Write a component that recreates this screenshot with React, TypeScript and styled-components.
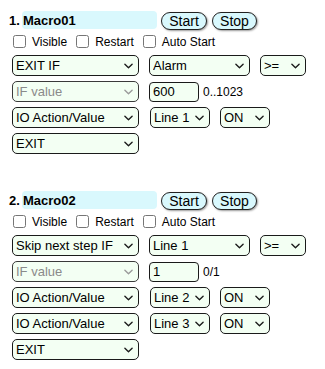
import React from "react";
import styled, { createGlobalStyle } from "styled-components";

const Global = createGlobalStyle`
  body {
    margin: 8px;
    font-family: "Liberation Sans", Arial, sans-serif;
    background: #ffffff;
    color: #000;
  }
`;

const chevron = (color: string) =>
  `url("data:image/svg+xml;utf8,<svg xmlns='http://www.w3.org/2000/svg' width='10' height='6' viewBox='0 0 10 6'><path d='M1 1 L5 5 L9 1' fill='none' stroke='${encodeURIComponent(
    color
  )}' stroke-width='1.5' stroke-linecap='round' stroke-linejoin='round'/></svg>")`;

const Page = styled.div`
  display: flex;
  flex-direction: column;
`;

const Section = styled.div<{ $first?: boolean }>`
  display: flex;
  flex-direction: column;
  margin-top: ${(p) => (p.$first ? "3px" : "37px")};
  padding-left: 1px;
`;

const TitleRow = styled.div`
  display: flex;
  align-items: center;
  height: 18px;
`;

const Num = styled.span`
  font-weight: bold;
  font-size: 13px;
  width: 13px;
`;

const NameInput = styled.input`
  box-sizing: border-box;
  width: 135px;
  height: 18px;
  border: none;
  border-radius: 4px;
  background: #d9f8fd;
  font-family: "Liberation Sans", Arial, sans-serif;
  font-weight: bold;
  font-size: 13px;
  padding: 0 1px;
  margin: 0 4px 0 0;
  color: #000;
  outline: none;
`;

const PillButton = styled.button<{ $w: number }>`
  box-sizing: border-box;
  width: ${(p) => p.$w}px;
  height: 18px;
  margin: 1px 5px 0 0;
  padding: 0;
  border: 1px solid #222;
  border-radius: 9px;
  background: #d9f8fd;
  box-shadow: 1px 1px 2px #9a9a9a;
  font-family: "Liberation Sans", Arial, sans-serif;
  font-size: 14px;
  line-height: 16px;
  color: #000;
`;

const CheckRow = styled.div`
  display: flex;
  align-items: center;
  height: 13px;
  margin-top: 6px;
  font-size: 12px;
`;

const Check = styled.input`
  width: 13px;
  height: 13px;
  margin: 0 6px 0 4px;
`;

const CheckLabel = styled.label`
  margin-right: 5px;
`;

const Rows = styled.div`
  display: flex;
  flex-direction: column;
  gap: 5px;
  margin-top: 7px;
  padding-left: 3px;
`;

const Row = styled.div`
  display: flex;
  align-items: center;
  height: 21px;
`;

const Select = styled.select<{ $w: number; $ml?: number }>`
  appearance: none;
  -webkit-appearance: none;
  box-sizing: border-box;
  width: ${(p) => p.$w}px;
  height: 21px;
  margin: 0 0 0 ${(p) => p.$ml ?? 0}px;
  padding: 0 14px 0 3px;
  border: 1px solid #1a1a1a;
  border-radius: 5px;
  background-color: #f3fff3;
  background-image: ${chevron("#1a1a1a")};
  background-repeat: no-repeat;
  background-position: right 5px center;
  background-size: 9px 6px;
  font-family: "Liberation Sans", Arial, sans-serif;
  font-size: 13px;
  color: #000;
  &:disabled {
    color: #8a8a8a;
    border-color: #3a3a3a;
    background-color: #f3fff3;
    background-image: ${chevron("#9a9a9a")};
    opacity: 1;
  }
`;

const ValueInput = styled.input`
  box-sizing: border-box;
  width: 50px;
  height: 20px;
  margin-left: 10px;
  padding: 0 3px;
  border: 1px solid #1a1a1a;
  border-radius: 4px;
  background: #f3fff3;
  font-family: "Liberation Sans", Arial, sans-serif;
  font-size: 13px;
  color: #000;
`;

const Range = styled.span`
  margin-left: 4px;
  font-size: 12px;
`;

type Step =
  | { kind: "cond"; op: string; src: string }
  | { kind: "value"; value: string; range: string }
  | { kind: "io"; line: string; state: string }
  | { kind: "exit" };

type Macro = { num: number; name: string; steps: Step[] };

const macros: Macro[] = [
  {
    num: 1,
    name: "Macro01",
    steps: [
      { kind: "cond", op: "EXIT IF", src: "Alarm" },
      { kind: "value", value: "600", range: "0..1023" },
      { kind: "io", line: "Line 1", state: "ON" },
      { kind: "exit" },
    ],
  },
  {
    num: 2,
    name: "Macro02",
    steps: [
      { kind: "cond", op: "Skip next step IF", src: "Line 1" },
      { kind: "value", value: "1", range: "0/1" },
      { kind: "io", line: "Line 2", state: "ON" },
      { kind: "io", line: "Line 3", state: "ON" },
      { kind: "exit" },
    ],
  },
];

const StepRow: React.FC<{ step: Step }> = ({ step }) => {
  switch (step.kind) {
    case "cond":
      return (
        <Row>
          <Select $w={127} defaultValue={step.op}>
            <option>{step.op}</option>
          </Select>
          <Select $w={101} $ml={10} defaultValue={step.src}>
            <option>{step.src}</option>
          </Select>
          <Select $w={46} $ml={10} defaultValue=">=">
            <option>&gt;=</option>
          </Select>
        </Row>
      );
    case "value":
      return (
        <Row>
          <Select $w={127} disabled defaultValue="IF value">
            <option>IF value</option>
          </Select>
          <ValueInput defaultValue={step.value} />
          <Range>{step.range}</Range>
        </Row>
      );
    case "io":
      return (
        <Row>
          <Select $w={127} defaultValue="IO Action/Value">
            <option>IO Action/Value</option>
          </Select>
          <Select $w={60} $ml={11} defaultValue={step.line}>
            <option>{step.line}</option>
          </Select>
          <Select $w={50} $ml={10} defaultValue={step.state}>
            <option>{step.state}</option>
          </Select>
        </Row>
      );
    default:
      return (
        <Row>
          <Select $w={127} defaultValue="EXIT">
            <option>EXIT</option>
          </Select>
        </Row>
      );
  }
};

export default function App() {
  return (
    <Page>
      <Global />
      {macros.map((m, i) => (
        <Section key={m.num} $first={i === 0}>
          <TitleRow>
            <Num>{m.num}.</Num>
            <NameInput defaultValue={m.name} />
            <PillButton $w={46}>Start</PillButton>
            <PillButton $w={45}>Stop</PillButton>
          </TitleRow>
          <CheckRow>
            <Check type="checkbox" />
            <CheckLabel>Visible</CheckLabel>
            <Check type="checkbox" />
            <CheckLabel>Restart</CheckLabel>
            <Check type="checkbox" />
            <CheckLabel>Auto Start</CheckLabel>
          </CheckRow>
          <Rows>
            {m.steps.map((s, j) => (
              <StepRow key={j} step={s} />
            ))}
          </Rows>
        </Section>
      ))}
    </Page>
  );
}
